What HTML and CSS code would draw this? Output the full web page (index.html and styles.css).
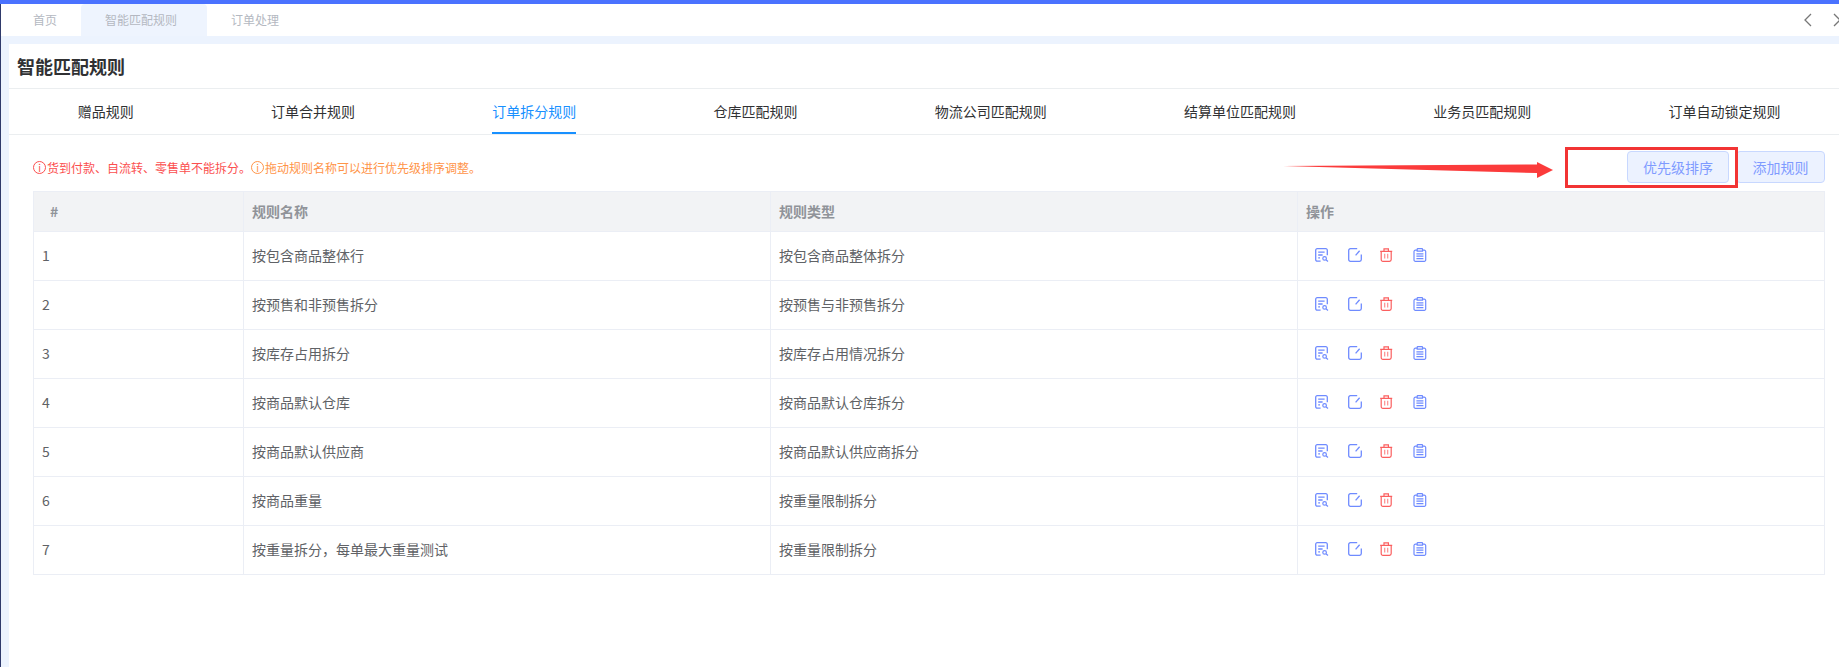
FILE: index.html
```html
<!DOCTYPE HTML>
<html>

<head>
    <meta charset="utf-8">
    <title>智能匹配规则</title>
    <link rel="stylesheet" href="styles.css">
</head>

<body>

<svg class="defs" width="0" height="0">
    <symbol id="i-view" viewBox="0 0 14 14">
        <path d="M5.6 13.2H2.2a1.5 1.5 0 0 1-1.5-1.5V2.2A1.5 1.5 0 0 1 2.2.7h8.6a1.5 1.5 0 0 1 1.5 1.5v5" fill="none" stroke="currentColor" stroke-width="1.3"/>
        <path d="M3.2 4.2h6.4M3.2 7h4.4M3.2 9.8h1.8" fill="none" stroke="currentColor" stroke-width="1.3"/>
        <circle cx="9.6" cy="10.4" r="1.8" fill="none" stroke="currentColor" stroke-width="1.2"/>
        <path d="M11 11.8l2 1.7" fill="none" stroke="currentColor" stroke-width="1.2"/>
    </symbol>
    <symbol id="i-edit" viewBox="0 0 14 14">
        <path d="M13.3 6.4v5.2a1.7 1.7 0 0 1-1.7 1.7H2.4a1.7 1.7 0 0 1-1.7-1.7V2.4A1.7 1.7 0 0 1 2.4.7h6.8" fill="none" stroke="currentColor" stroke-width="1.3"/>
        <path d="M7.6 7.4l4-4.6" fill="none" stroke="currentColor" stroke-width="1.3"/>
    </symbol>
    <symbol id="i-del" viewBox="0 0 14 14">
        <path d="M.2 3.4h12M4 3.4V.8h4.4v2.6" fill="none" stroke="currentColor" stroke-width="1.2"/>
        <path d="M1.2 3.4v8.2a1.7 1.7 0 0 0 1.7 1.7h6.6a1.7 1.7 0 0 0 1.7-1.7V3.4" fill="none" stroke="currentColor" stroke-width="1.2"/>
        <path d="M4.7 5.8v4.6M7.7 5.8v4.6" fill="none" stroke="currentColor" stroke-opacity=".7" stroke-width="1.2"/>
    </symbol>
    <symbol id="i-copy" viewBox="0 0 14 14">
        <path d="M4.2 2.2H2.4A1.4 1.4 0 0 0 1 3.6v8.3a1.4 1.4 0 0 0 1.4 1.4h8.9a1.4 1.4 0 0 0 1.4-1.4V3.6a1.4 1.4 0 0 0-1.4-1.4H9.5" fill="none" stroke="currentColor" stroke-width="1.2"/>
        <path d="M4.2 3.2V1.2a.5.5 0 0 1 .5-.5h4.3a.5.5 0 0 1 .5.5v2z" fill="none" stroke="currentColor" stroke-width="1.2"/>
        <path d="M3.4 5.8h7M3.4 8.2h7M3.4 10.6h7" fill="none" stroke="currentColor" stroke-width="1.2"/>
    </symbol>
</svg>

<div class="page">

    <div class="top-line"></div>

    <div class="top-tabs">
        <div class="top-tab">首页</div>
        <div class="top-tab active">智能匹配规则</div>
        <div class="top-tab">订单处理</div>
        <div class="top-arrows">
            <svg width="10" height="14" viewBox="0 0 10 14"><path d="M8 1L2 7l6 6" fill="none" stroke="#777" stroke-width="1.3"/></svg>
            <svg width="10" height="14" viewBox="0 0 10 14"><path d="M2 1l6 6-6 6" fill="none" stroke="#777" stroke-width="1.3"/></svg>
        </div>
    </div>

    <div class="panel">
        <h1 class="panel-title">智能匹配规则</h1>

        <div class="rule-tabs">
            <div class="rule-tab"><span>赠品规则</span></div>
            <div class="rule-tab"><span>订单合并规则</span></div>
            <div class="rule-tab active"><span>订单拆分规则</span></div>
            <div class="rule-tab"><span>仓库匹配规则</span></div>
            <div class="rule-tab"><span>物流公司匹配规则</span></div>
            <div class="rule-tab"><span>结算单位匹配规则</span></div>
            <div class="rule-tab"><span>业务员匹配规则</span></div>
            <div class="rule-tab"><span>订单自动锁定规则</span></div>
        </div>

        <div class="content">
            <div class="toolbar">
                <div class="notes">
                    <span class="note red"><i class="dot">i</i>货到付款、自流转、零售单不能拆分。</span>
                    <span class="note orange"><i class="dot">i</i>拖动规则名称可以进行优先级排序调整。</span>
                </div>
                <div class="buttons">
                    <button class="btn">优先级排序</button>
                    <button class="btn">添加规则</button>
                </div>
            </div>

            <table class="rules">
                <colgroup>
                    <col class="c1">
                    <col class="c2">
                    <col class="c3">
                    <col class="c4">
                </colgroup>
                <tr>
                    <th class="num">#</th>
                    <th>规则名称</th>
                    <th>规则类型</th>
                    <th>操作</th>
                </tr>
                <tr>
                    <td>1</td>
                    <td>按包含商品整体行</td>
                    <td>按包含商品整体拆分</td>
                    <td><div class="ops"><svg class="op"><use href="#i-view"/></svg><svg class="op"><use href="#i-edit"/></svg><svg class="op del"><use href="#i-del"/></svg><svg class="op"><use href="#i-copy"/></svg></div></td>
                </tr>
                <tr>
                    <td>2</td>
                    <td>按预售和非预售拆分</td>
                    <td>按预售与非预售拆分</td>
                    <td><div class="ops"><svg class="op"><use href="#i-view"/></svg><svg class="op"><use href="#i-edit"/></svg><svg class="op del"><use href="#i-del"/></svg><svg class="op"><use href="#i-copy"/></svg></div></td>
                </tr>
                <tr>
                    <td>3</td>
                    <td>按库存占用拆分</td>
                    <td>按库存占用情况拆分</td>
                    <td><div class="ops"><svg class="op"><use href="#i-view"/></svg><svg class="op"><use href="#i-edit"/></svg><svg class="op del"><use href="#i-del"/></svg><svg class="op"><use href="#i-copy"/></svg></div></td>
                </tr>
                <tr>
                    <td>4</td>
                    <td>按商品默认仓库</td>
                    <td>按商品默认仓库拆分</td>
                    <td><div class="ops"><svg class="op"><use href="#i-view"/></svg><svg class="op"><use href="#i-edit"/></svg><svg class="op del"><use href="#i-del"/></svg><svg class="op"><use href="#i-copy"/></svg></div></td>
                </tr>
                <tr>
                    <td>5</td>
                    <td>按商品默认供应商</td>
                    <td>按商品默认供应商拆分</td>
                    <td><div class="ops"><svg class="op"><use href="#i-view"/></svg><svg class="op"><use href="#i-edit"/></svg><svg class="op del"><use href="#i-del"/></svg><svg class="op"><use href="#i-copy"/></svg></div></td>
                </tr>
                <tr>
                    <td>6</td>
                    <td>按商品重量</td>
                    <td>按重量限制拆分</td>
                    <td><div class="ops"><svg class="op"><use href="#i-view"/></svg><svg class="op"><use href="#i-edit"/></svg><svg class="op del"><use href="#i-del"/></svg><svg class="op"><use href="#i-copy"/></svg></div></td>
                </tr>
                <tr>
                    <td>7</td>
                    <td>按重量拆分，每单最大重量测试</td>
                    <td>按重量限制拆分</td>
                    <td><div class="ops"><svg class="op"><use href="#i-view"/></svg><svg class="op"><use href="#i-edit"/></svg><svg class="op del"><use href="#i-del"/></svg><svg class="op"><use href="#i-copy"/></svg></div></td>
                </tr>
            </table>
        </div>
    </div>

    <!-- red marks drawn over the screenshot -->
    <div class="mark-box"></div>
    <svg class="mark-arrow" width="270" height="16" viewBox="0 0 270 16">
        <path d="M0 4L254 2.5V0L270 8L254 16V11z" fill="#fb3b3b"/>
    </svg>

</div>

</body>

</html>
```

FILE: styles.css
```css
/* page frame */

* {
    box-sizing: border-box;
}

html, body {
    margin: 0;
    height: 100%;
    overflow: hidden;
}

body {
    font-family: "Noto Sans CJK SC", "Liberation Sans", sans-serif;
    font-size: 14px;
    background: #fff;
}

.defs {
    display: block;
    height: 0;
}

.page {
    position: relative;
    display: flex;
    flex-direction: column;
    height: 667px;
    background: #ecf3fe;
    border-left: 1px solid #2f3a6b;
}

.top-line {
    flex: none;
    height: 4px;
    margin-left: -1px;
    background: #4a72ff;
}

/* top tabs */

.top-tabs {
    flex: none;
    display: flex;
    height: 32px;
    padding-left: 8px;
    background: #fff;
    font-size: 12px;
    line-height: 32px;
    color: #b4b8c1;
}

.top-tab {
    padding: 0 24px;
}

.top-tab.active {
    padding-right: 30px;
    background: #eef4fe;
    border-radius: 4px 4px 0 0;
}

.top-arrows {
    display: flex;
    align-items: center;
    gap: 19px;
    margin-left: auto;
    margin-right: -3px;
}

/* panel */

.panel {
    flex: 1;
    margin: 8px 0 0 8px;
    background: #fff;
}

.panel-title {
    height: 45px;
    margin: 0;
    padding: 0 8px;
    border-bottom: 1px solid #ebeef0;
    font-size: 18px;
    font-weight: 600;
    line-height: 45px;
    color: #303133;
}

.rule-tabs {
    display: flex;
    height: 46px;
    border-bottom: 1px solid #ebeef0;
    white-space: nowrap;
    color: #303133;
}

.rule-tab {
    flex: none;
    padding: 0 68.65px;
    line-height: 44px;
}

.rule-tab span {
    display: block;
    height: 45px;
}

.rule-tab.active {
    color: #1890ff;
}

.rule-tab.active span {
    border-bottom: 2px solid #1890ff;
}

.content {
    padding: 16px 14px 0 24px;
}

.toolbar {
    display: flex;
    align-items: center;
    justify-content: space-between;
    height: 32px;
}

.notes {
    display: flex;
    font-size: 12px;
}

.note {
    display: flex;
    align-items: center;
}

.note.red {
    color: #fb4f4f;
}

.note.orange {
    color: #ff9448;
}

.dot {
    width: 13px;
    height: 13px;
    margin-right: 1px;
    border: 1px solid currentColor;
    border-radius: 50%;
    font-size: 10px;
    font-style: normal;
    line-height: 11px;
    text-align: center;
}

.buttons {
    display: flex;
    gap: 7px;
}

.btn {
    height: 32px;
    padding: 0 15.5px;
    border: 1px solid #c8d8ff;
    border-radius: 4px;
    background: #ecf2ff;
    font-family: inherit;
    font-size: 14px;
    color: #7f9bff;
}

.btn:first-child {
    padding: 0 15px;
    width: 102px;
}

/* rules table */

.rules {
    width: 100%;
    margin-top: 8px;
    border-collapse: collapse;
    table-layout: fixed;
}

.c1 {
    width: 210px;
}

.c2 {
    width: 527px;
}

.c3 {
    width: 527px;
}

.rules th, .rules td {
    padding: 0 8px 2px;
    border: 1px solid #ebeef5;
    text-align: left;
}

.rules th {
    height: 40px;
    background: #f2f3f5;
    font-weight: 600;
    color: #909399;
}

.rules th.num {
    padding-left: 16px;
}

.rules td {
    height: 49px;
    color: #606266;
}

.ops {
    display: flex;
    gap: 18.5px;
    padding-left: 9px;
}

.op {
    width: 14px;
    height: 14px;
    color: #6f8bff;
}

.op.del {
    color: #fb5f5f;
}

/* annotation */

.mark-box {
    position: absolute;
    left: 1564px;
    top: 147px;
    width: 173px;
    height: 41px;
    border: 3px solid #f23434;
}

.mark-arrow {
    position: absolute;
    left: 1282px;
    top: 162px;
}
```
